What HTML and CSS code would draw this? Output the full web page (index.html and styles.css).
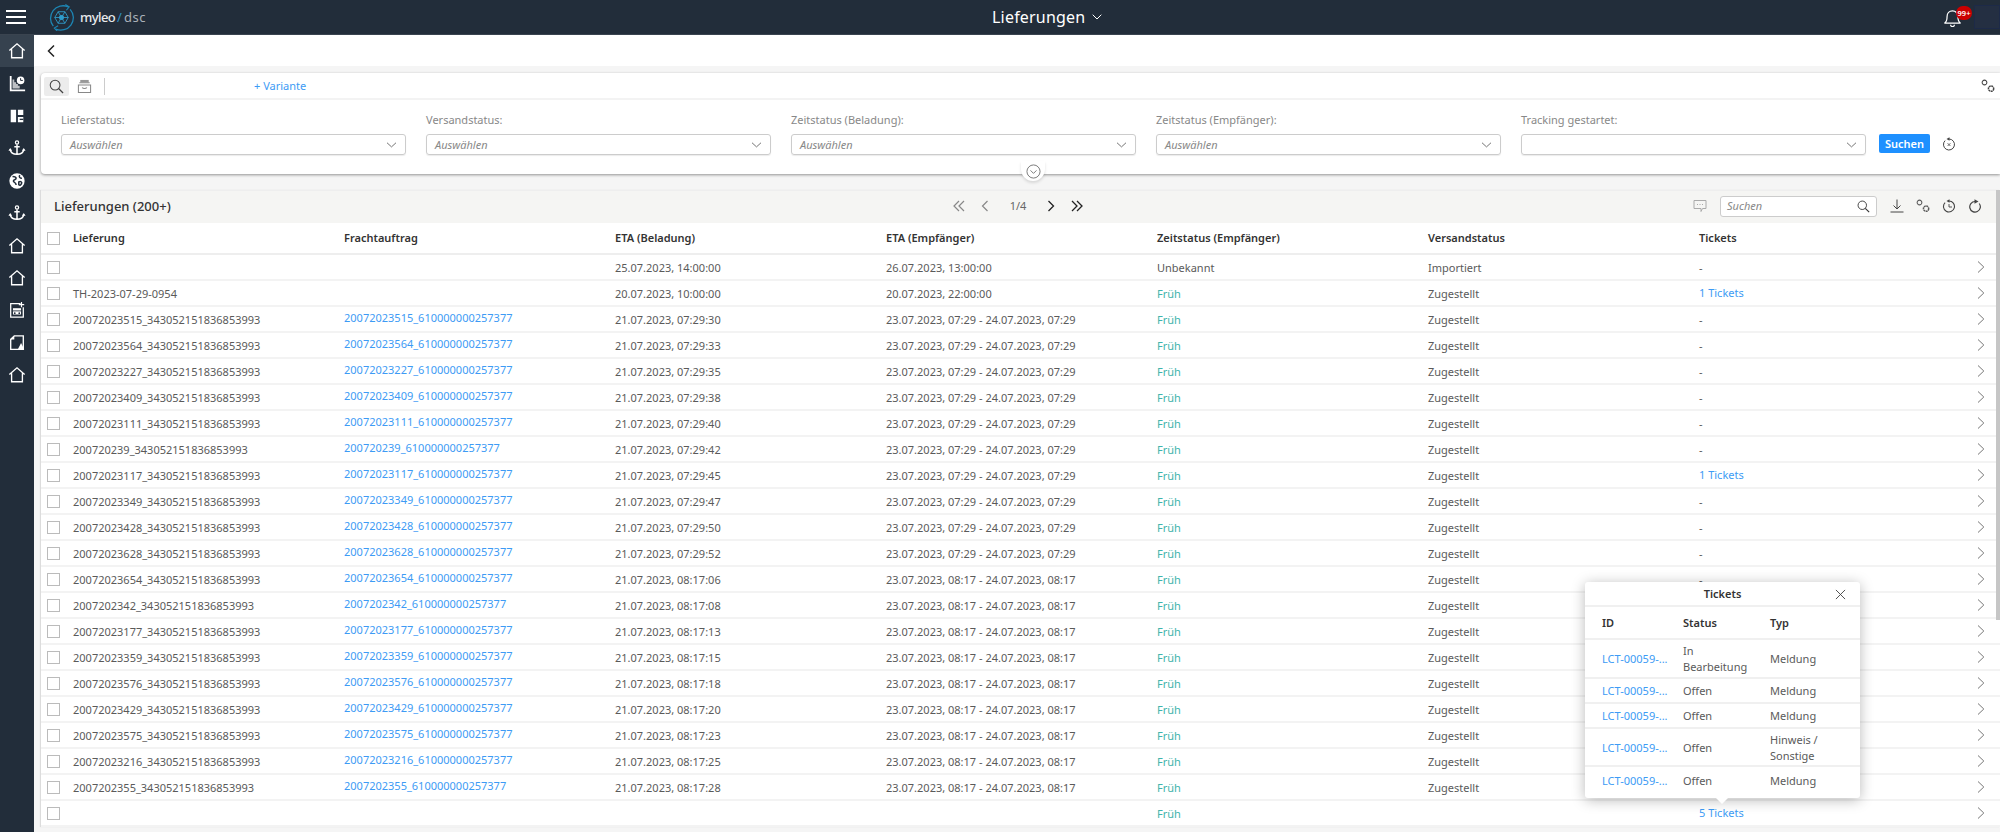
FILE: index.html
```html
<!DOCTYPE html>
<html lang="de">
<head>
<meta charset="utf-8">
<title>Lieferungen</title>
<link rel="stylesheet" href="styles.css">
</head>
<body>
<svg class="defs" width="0" height="0" aria-hidden="true">
  <symbol id="home" viewBox="0 0 20 20"><path d="M1.500 9.500 10 2l8.500 7.500M4 8v9.500h12V8M3.500 17.500h13" fill="none" stroke="currentColor" stroke-width="1.500"/></symbol>
  <symbol id="anchor" viewBox="0 0 20 20"><circle cx="10" cy="3.800" r="1.800" fill="none" stroke="currentColor" stroke-width="1.400"/><path d="M10 6v11M7 8.500h6M2.500 11.500c.5 3.500 3.500 5.500 7.500 5.500s7-2 7.500-5.500" fill="none" stroke="currentColor" stroke-width="1.700"/><path d="M.5 13l2-3 2 3zM15.500 13l2-3 2 3z" fill="currentColor"/></symbol>
  <symbol id="chev-r" viewBox="0 0 12 12"><path d="M3 .5 8.800 6 3 11.500" fill="none" stroke="currentColor" stroke-width="1"/></symbol>
  <symbol id="chev-d" viewBox="0 0 14 8"><path d="M1 1l6 5.500L13 1" fill="none" stroke="currentColor" stroke-width="1.200"/></symbol>
  <symbol id="gears" viewBox="0 0 16 16"><circle cx="4" cy="4" r="2.700" fill="none" stroke="currentColor" stroke-width="1.200"/><circle cx="11.500" cy="11" r="3" fill="none" stroke="currentColor" stroke-width="1.700" stroke-dasharray="2.200 .6"/></symbol>
  <symbol id="mag" viewBox="0 0 16 16"><circle cx="6.500" cy="6.500" r="5.200" fill="none" stroke="currentColor" stroke-width="1.100"/><path d="M10.200 10.200 15 15" stroke="currentColor" stroke-width="1.400"/></symbol>
</svg>

<header class="topbar">
  <button class="burger" aria-label="Menü"><span></span><span></span><span></span></button>
  <div class="brand">
    <svg class="logo" viewBox="0 0 28 28" width="27" height="27">
      <path d="M5.500 23A13 13 0 0 1 21 3" fill="none" stroke="#1d86b4" stroke-width="1.300"/>
      <path d="M23 5.500A13 13 0 0 1 8 26" fill="none" stroke="#1d86b4" stroke-width="1.300"/>
      <path d="M18 .5 22 3l-3 3.500M10.500 22.500 6.500 25l3 3" fill="none" stroke="#1d86b4" stroke-width="1.100"/>
      <path d="M7 14h14M10.500 8l7 12M17.500 8l-7 12M10.500 8h7l3.500 6-3.500 6h-7L7 14z" fill="none" stroke="#2f9ccb" stroke-width=".9"/>
      <circle cx="14" cy="14" r="2.600" fill="#2f9ccb"/>
    </svg>
    <span class="brand-name">myleo</span><span class="brand-slash">/</span><span class="brand-sub">dsc</span>
  </div>
  <div class="page-title">Lieferungen<svg viewBox="0 0 10 6" width="10" height="6"><path d="M.7.7 5 5 9.300.7" fill="none" stroke="#fff" stroke-width="1"/></svg></div>
  <div class="bell">
    <svg viewBox="0 0 20 20" width="19" height="19"><path d="M1.500 16c2-1 2.800-3 2.800-7 0-3.400 2.300-6 5.700-6s5.700 2.600 5.700 6c0 4 .8 6 2.800 7zM8 17.500a2 2 0 0 0 4 0" fill="none" stroke="#fff" stroke-width="1.300"/></svg>
    <span class="badge">99+</span>
  </div>
  <div class="avatar"></div>
</header>

<div class="shell">
  <nav class="sidebar">
    <a class="nav-item active"><svg><use href="#home"/></svg></a>
    <a class="nav-item"><svg viewBox="0 0 20 20"><path d="M2 1h2v15h15v2H2z" fill="currentColor"/><path d="M5 5h2v3h2v2h2v2h2v3H5z" fill="currentColor" opacity=".7"/><circle cx="14" cy="6" r="4.200" fill="currentColor"/><path d="M14 3.500V6h2.500" fill="none" stroke="#222d3a" stroke-width="1.100"/></svg></a>
    <a class="nav-item"><svg viewBox="0 0 20 20"><path d="M3 3h14v14H3zM9 3v14h2v-6h6V9h-6V3z" fill="currentColor" fill-rule="evenodd"/><path d="M13 13h4v1.500h-4z" fill="#222d3a"/></svg></a>
    <a class="nav-item"><svg><use href="#anchor"/></svg></a>
    <a class="nav-item"><svg viewBox="0 0 20 20"><circle cx="10" cy="10" r="8.500" fill="currentColor"/><path d="M5 5c2 0 4 0 4 2s-3 1-3 3 3 1 3 4.500M13 3.500c-1 2 0 3.500 2.500 3.500M12 11c2-1 4 0 3 2s-2 2-3 1z" fill="none" stroke="#222d3a" stroke-width="1.700"/></svg></a>
    <a class="nav-item"><svg><use href="#anchor"/></svg></a>
    <a class="nav-item"><svg><use href="#home"/></svg></a>
    <a class="nav-item"><svg><use href="#home"/></svg></a>
    <a class="nav-item"><svg viewBox="0 0 20 20"><path d="M14 3H3v15h14V7" fill="none" stroke="currentColor" stroke-width="1.400"/><path d="M15 1v6M12 4h6" stroke="currentColor" stroke-width="1.300"/><path d="M5.500 8h9v7h-9z" fill="currentColor"/><path d="M5.500 11h9" stroke="#222d3a"/><circle cx="7.500" cy="13.500" r="1" fill="#222d3a"/><circle cx="12.500" cy="13.500" r="1" fill="#222d3a"/></svg></a>
    <a class="nav-item"><svg viewBox="0 0 20 20"><path d="M7 2h10v15H3V6z" fill="none" stroke="currentColor" stroke-width="1.500"/><path d="M3 6l4-4v4z" fill="currentColor"/><path d="M11 17l3.500-7 3.500 7z" fill="currentColor"/></svg></a>
    <a class="nav-item"><svg><use href="#home"/></svg></a>
  </nav>

  <main class="content">
    <div class="subbar"><svg width="10" height="14" viewBox="0 0 10 14"><path d="M8 1.500 2.500 7 8 12.500" fill="none" stroke="#222" stroke-width="1.500"/></svg></div>

    <section class="filter-card">
      <div class="filter-tools">
        <span class="tool-active"><svg width="15" height="15"><use href="#mag"/></svg></span>
        <svg class="tool-box" viewBox="0 0 16 16" width="15" height="15"><path d="M3.500 1h9v2.500h-9z" fill="#999"/><path d="M2.500 4h11M1.500 6.500h13v8h-13zM5.500 9c1 1.500 4 1.500 5 0" fill="none" stroke="#888" stroke-width="1.100"/></svg>
        <span class="tool-sep"></span>
        <a class="variant">+ Variante</a>
        <svg class="tool-gears" width="14" height="14"><use href="#gears"/></svg>
      </div>
      <div class="filter-fields">
        <div class="field"><label>Lieferstatus:</label><div class="select"><em>Auswählen</em><svg width="11" height="6"><use href="#chev-d"/></svg></div></div>
        <div class="field"><label>Versandstatus:</label><div class="select"><em>Auswählen</em><svg width="11" height="6"><use href="#chev-d"/></svg></div></div>
        <div class="field"><label>Zeitstatus (Beladung):</label><div class="select"><em>Auswählen</em><svg width="11" height="6"><use href="#chev-d"/></svg></div></div>
        <div class="field"><label>Zeitstatus (Empfänger):</label><div class="select"><em>Auswählen</em><svg width="11" height="6"><use href="#chev-d"/></svg></div></div>
        <div class="field"><label>Tracking gestartet:</label><div class="select"><em></em><svg width="11" height="6"><use href="#chev-d"/></svg></div></div>
        <div class="field-actions">
          <button class="btn-search">Suchen</button>
          <svg viewBox="0 0 14 14" width="14" height="14"><path d="M3.100 3.600A5.500 5.500 0 1 0 7 2" fill="none" stroke="#444" stroke-width="1"/><path d="M7.500.2v3.600L4.500 2z" fill="#444"/><path d="M5.600 6.200l2.800 2.800m0-2.800L5.600 9" stroke="#444" stroke-width=".8"/></svg>
        </div>
      </div>
      <span class="collapse"><svg viewBox="0 0 16 16" width="15" height="15"><circle cx="8" cy="8" r="7" fill="none" stroke="#666" stroke-width=".9"/><path d="M4.800 6.800 8 10l3.200-3.200" fill="none" stroke="#666" stroke-width=".9"/></svg></span>
    </section>

    <section class="table-card">
      <div class="table-head">
        <h2>Lieferungen (200+)</h2>
        <div class="pager">
          <svg class="off" viewBox="0 0 12 12" width="12" height="12"><path d="M6 1 1 6l5 5M11 1 6 6l5 5" fill="none" stroke="currentColor" stroke-width="1.200"/></svg>
          <svg class="off" viewBox="0 0 8 12" width="8" height="12"><path d="M6.500 1 1.500 6l5 5" fill="none" stroke="currentColor" stroke-width="1.200"/></svg>
          <span class="page-num">1/4</span>
          <svg viewBox="0 0 8 12" width="8" height="12"><path d="M1.500 1l5 5-5 5" fill="none" stroke="currentColor" stroke-width="1.300"/></svg>
          <svg viewBox="0 0 12 12" width="12" height="12"><path d="M1 1l5 5-5 5M6 1l5 5-5 5" fill="none" stroke="currentColor" stroke-width="1.300"/></svg>
        </div>
        <div class="table-tools">
          <svg class="tool-chat" viewBox="0 0 14 14" width="14" height="14"><path d="M1 1.500h12v8H9.500l-1.500 3V9.500H1z" fill="none" stroke="#aaa" stroke-width="1"/><path d="M4 5.500h1M6.500 5.500h1M9 5.500h1" stroke="#aaa"/></svg>
          <div class="search"><em>Suchen</em><svg width="13" height="13"><use href="#mag"/></svg></div>
          <svg viewBox="0 0 14 14" width="14" height="14"><path d="M7 .5V10M3.500 6.500 7 10l3.500-3.500M.5 13h13" fill="none" stroke="#444" stroke-width="1"/></svg>
          <svg width="14" height="14"><use href="#gears"/></svg>
          <svg viewBox="0 0 14 14" width="14" height="14"><path d="M3.100 3.600A5.500 5.500 0 1 0 7 2" fill="none" stroke="#444" stroke-width="1.100"/><path d="M7.500.2v3.600L4.500 2z" fill="#444"/><path d="M7 5v3h3" fill="none" stroke="#444" stroke-width=".9"/></svg>
          <svg viewBox="0 0 14 14" width="14" height="14"><path d="M11.200 4.500A5.300 5.300 0 1 1 7 2.500" fill="none" stroke="#444" stroke-width="1.200"/><path d="M6.500.3v4.400l4-2.200z" fill="#444"/></svg>
        </div>
      </div>

      <div class="row head"><span class="cb"></span><span>Lieferung</span><span>Frachtauftrag</span><span>ETA (Beladung)</span><span>ETA (Empfänger)</span><span>Zeitstatus (Empfänger)</span><span>Versandstatus</span><span>Tickets</span><span></span></div>

      <div class="row"><span class="cb"></span><span></span><span></span><span>25.07.2023, 14:00:00</span><span>26.07.2023, 13:00:00</span><span>Unbekannt</span><span>Importiert</span><span>-</span><svg class="go"><use href="#chev-r"/></svg></div>
      <div class="row"><span class="cb"></span><span>TH-2023-07-29-0954</span><span></span><span>20.07.2023, 10:00:00</span><span>20.07.2023, 22:00:00</span><span class="early">Früh</span><span>Zugestellt</span><a class="link">1 Tickets</a><svg class="go"><use href="#chev-r"/></svg></div>
      <div class="row"><span class="cb"></span><span>20072023515_343052151836853993</span><a class="link up">20072023515_610000000257377</a><span>21.07.2023, 07:29:30</span><span>23.07.2023, 07:29 - 24.07.2023, 07:29</span><span class="early">Früh</span><span>Zugestellt</span><span>-</span><svg class="go"><use href="#chev-r"/></svg></div>
      <div class="row"><span class="cb"></span><span>20072023564_343052151836853993</span><a class="link up">20072023564_610000000257377</a><span>21.07.2023, 07:29:33</span><span>23.07.2023, 07:29 - 24.07.2023, 07:29</span><span class="early">Früh</span><span>Zugestellt</span><span>-</span><svg class="go"><use href="#chev-r"/></svg></div>
      <div class="row"><span class="cb"></span><span>20072023227_343052151836853993</span><a class="link up">20072023227_610000000257377</a><span>21.07.2023, 07:29:35</span><span>23.07.2023, 07:29 - 24.07.2023, 07:29</span><span class="early">Früh</span><span>Zugestellt</span><span>-</span><svg class="go"><use href="#chev-r"/></svg></div>
      <div class="row"><span class="cb"></span><span>20072023409_343052151836853993</span><a class="link up">20072023409_610000000257377</a><span>21.07.2023, 07:29:38</span><span>23.07.2023, 07:29 - 24.07.2023, 07:29</span><span class="early">Früh</span><span>Zugestellt</span><span>-</span><svg class="go"><use href="#chev-r"/></svg></div>
      <div class="row"><span class="cb"></span><span>20072023111_343052151836853993</span><a class="link up">20072023111_610000000257377</a><span>21.07.2023, 07:29:40</span><span>23.07.2023, 07:29 - 24.07.2023, 07:29</span><span class="early">Früh</span><span>Zugestellt</span><span>-</span><svg class="go"><use href="#chev-r"/></svg></div>
      <div class="row"><span class="cb"></span><span>200720239_343052151836853993</span><a class="link up">200720239_610000000257377</a><span>21.07.2023, 07:29:42</span><span>23.07.2023, 07:29 - 24.07.2023, 07:29</span><span class="early">Früh</span><span>Zugestellt</span><span>-</span><svg class="go"><use href="#chev-r"/></svg></div>
      <div class="row"><span class="cb"></span><span>20072023117_343052151836853993</span><a class="link up">20072023117_610000000257377</a><span>21.07.2023, 07:29:45</span><span>23.07.2023, 07:29 - 24.07.2023, 07:29</span><span class="early">Früh</span><span>Zugestellt</span><a class="link">1 Tickets</a><svg class="go"><use href="#chev-r"/></svg></div>
      <div class="row"><span class="cb"></span><span>20072023349_343052151836853993</span><a class="link up">20072023349_610000000257377</a><span>21.07.2023, 07:29:47</span><span>23.07.2023, 07:29 - 24.07.2023, 07:29</span><span class="early">Früh</span><span>Zugestellt</span><span>-</span><svg class="go"><use href="#chev-r"/></svg></div>
      <div class="row"><span class="cb"></span><span>20072023428_343052151836853993</span><a class="link up">20072023428_610000000257377</a><span>21.07.2023, 07:29:50</span><span>23.07.2023, 07:29 - 24.07.2023, 07:29</span><span class="early">Früh</span><span>Zugestellt</span><span>-</span><svg class="go"><use href="#chev-r"/></svg></div>
      <div class="row"><span class="cb"></span><span>20072023628_343052151836853993</span><a class="link up">20072023628_610000000257377</a><span>21.07.2023, 07:29:52</span><span>23.07.2023, 07:29 - 24.07.2023, 07:29</span><span class="early">Früh</span><span>Zugestellt</span><span>-</span><svg class="go"><use href="#chev-r"/></svg></div>
      <div class="row"><span class="cb"></span><span>20072023654_343052151836853993</span><a class="link up">20072023654_610000000257377</a><span>21.07.2023, 08:17:06</span><span>23.07.2023, 08:17 - 24.07.2023, 08:17</span><span class="early">Früh</span><span>Zugestellt</span><span>-</span><svg class="go"><use href="#chev-r"/></svg></div>
      <div class="row"><span class="cb"></span><span>2007202342_343052151836853993</span><a class="link up">2007202342_610000000257377</a><span>21.07.2023, 08:17:08</span><span>23.07.2023, 08:17 - 24.07.2023, 08:17</span><span class="early">Früh</span><span>Zugestellt</span><span>-</span><svg class="go"><use href="#chev-r"/></svg></div>
      <div class="row"><span class="cb"></span><span>20072023177_343052151836853993</span><a class="link up">20072023177_610000000257377</a><span>21.07.2023, 08:17:13</span><span>23.07.2023, 08:17 - 24.07.2023, 08:17</span><span class="early">Früh</span><span>Zugestellt</span><span>-</span><svg class="go"><use href="#chev-r"/></svg></div>
      <div class="row"><span class="cb"></span><span>20072023359_343052151836853993</span><a class="link up">20072023359_610000000257377</a><span>21.07.2023, 08:17:15</span><span>23.07.2023, 08:17 - 24.07.2023, 08:17</span><span class="early">Früh</span><span>Zugestellt</span><span>-</span><svg class="go"><use href="#chev-r"/></svg></div>
      <div class="row"><span class="cb"></span><span>20072023576_343052151836853993</span><a class="link up">20072023576_610000000257377</a><span>21.07.2023, 08:17:18</span><span>23.07.2023, 08:17 - 24.07.2023, 08:17</span><span class="early">Früh</span><span>Zugestellt</span><span>-</span><svg class="go"><use href="#chev-r"/></svg></div>
      <div class="row"><span class="cb"></span><span>20072023429_343052151836853993</span><a class="link up">20072023429_610000000257377</a><span>21.07.2023, 08:17:20</span><span>23.07.2023, 08:17 - 24.07.2023, 08:17</span><span class="early">Früh</span><span>Zugestellt</span><span>-</span><svg class="go"><use href="#chev-r"/></svg></div>
      <div class="row"><span class="cb"></span><span>20072023575_343052151836853993</span><a class="link up">20072023575_610000000257377</a><span>21.07.2023, 08:17:23</span><span>23.07.2023, 08:17 - 24.07.2023, 08:17</span><span class="early">Früh</span><span>Zugestellt</span><span>-</span><svg class="go"><use href="#chev-r"/></svg></div>
      <div class="row"><span class="cb"></span><span>20072023216_343052151836853993</span><a class="link up">20072023216_610000000257377</a><span>21.07.2023, 08:17:25</span><span>23.07.2023, 08:17 - 24.07.2023, 08:17</span><span class="early">Früh</span><span>Zugestellt</span><span>-</span><svg class="go"><use href="#chev-r"/></svg></div>
      <div class="row"><span class="cb"></span><span>2007202355_343052151836853993</span><a class="link up">2007202355_610000000257377</a><span>21.07.2023, 08:17:28</span><span>23.07.2023, 08:17 - 24.07.2023, 08:17</span><span class="early">Früh</span><span>Zugestellt</span><span>-</span><svg class="go"><use href="#chev-r"/></svg></div>
      <div class="row"><span class="cb"></span><span></span><span></span><span></span><span></span><span class="early">Früh</span><span></span><a class="link">5 Tickets</a><svg class="go"><use href="#chev-r"/></svg></div>
    </section>
  </main>
</div>

<aside class="popover">
  <div class="pop-title">Tickets<svg viewBox="0 0 12 12" width="11" height="11"><path d="M1 1l10 10M11 1 1 11" stroke="#444" stroke-width="1"/></svg></div>
  <div class="pop-row pop-head"><span>ID</span><span>Status</span><span>Typ</span></div>
  <div class="pop-row tall"><a class="link">LCT-00059-...</a><span>In Bearbeitung</span><span>Meldung</span></div>
  <div class="pop-row"><a class="link">LCT-00059-...</a><span>Offen</span><span>Meldung</span></div>
  <div class="pop-row"><a class="link">LCT-00059-...</a><span>Offen</span><span>Meldung</span></div>
  <div class="pop-row tall"><a class="link">LCT-00059-...</a><span>Offen</span><span>Hinweis / Sonstige</span></div>
  <div class="pop-row"><a class="link">LCT-00059-...</a><span>Offen</span><span>Meldung</span></div>
</aside>
<div class="scrollthumb"></div>
</body>
</html>
```
FILE: styles.css
```css
* { box-sizing: border-box; }
html, body { margin: 0; height: 832px; overflow: hidden; }
body { font: 11px/16px "Noto Sans", "Open Sans", sans-serif; color: #5a5a5a; background: #f5f5f5; }
em { font-style: italic; }
.defs { position: absolute; }

.topbar { height: 35px; background: #222d3a; border-bottom: 1px solid #3a4450; display: flex; align-items: center; color: #fff; position: relative; }
.burger { width: 34px; height: 35px; padding: 0 6px; border: 0; background: none; display: flex; flex-direction: column; justify-content: center; gap: 4px; }
.burger span { display: block; height: 2px; width: 20px; background: #fff; }
.brand { display: flex; align-items: center; margin-left: 14px; font-size: 13px; }
.logo { margin-right: 5px; }
.brand-name { color: #e8eaec; font-weight: 500; letter-spacing: -.6px; }
.brand-slash { color: #2f8fc0; margin: 0 2px; }
.brand-sub { color: #aab1b8; letter-spacing: .5px; }
.page-title { position: absolute; left: 992px; top: 6px; font-size: 16px; line-height: 22px; display: flex; align-items: center; gap: 7px; letter-spacing: .2px; }
.bell { position: absolute; left: 1943px; top: 8px; height: 20px; }
.badge { position: absolute; left: 13px; top: -2px; width: 16px; height: 14px; border-radius: 7px; background: #c00; color: #fff; font-size: 7.500px; line-height: 14px; text-align: center; font-weight: 600; }
.avatar { position: absolute; left: 1974px; top: 5px; width: 26px; height: 24px; background: #242f42; border: 1px solid #1d2a48; }

.shell { display: flex; height: 797px; }
.sidebar { width: 34px; flex: none; background: #222d3a; color: #fff; }
.nav-item { display: flex; align-items: center; justify-content: center; height: 32.400px; }
.nav-item.active { background: #36424f; }
.nav-item svg { width: 18px; height: 18px; }
.content { flex: 1; min-width: 0; }
.subbar { height: 31px; background: #fff; display: flex; align-items: center; padding-left: 12px; }

.filter-card { position: relative; margin: 7px 0 0 7px; height: 101px; background: #fff; border-radius: 4px 0 0 4px; box-shadow: 0 1px 3px rgba(0,0,0,.4); }
.filter-tools { height: 27px; display: flex; align-items: center; border-bottom: 2px solid #f3f3f3; padding: 1px 5px 0 3px; }
.tool-active { width: 25px; height: 19px; background: #ececec; border-radius: 2px; display: flex; align-items: center; justify-content: center; color: #444; }
.tool-box { margin-left: 8px; }
.tool-sep { width: 1px; height: 17px; background: #ccc; margin-left: 12px; }
.variant { color: #3d9bf5; margin-left: 149px; }
.tool-gears { margin-left: auto; color: #444; }
.filter-fields { display: grid; grid-template-columns: repeat(5, 345px) auto; column-gap: 20px; padding: 12px 0 0 20px; }
.field label { display: block; color: #888; height: 22px; line-height: 16px; }
.select { height: 21px; border: 1px solid #ccc; border-radius: 3px; display: flex; align-items: center; justify-content: space-between; padding: 0 8px; box-shadow: 0 1px 1px rgba(0,0,0,.08); }
.select em { color: #888; }
.select svg { color: #666; }
.field-actions { display: flex; align-items: center; gap: 12px; margin: 22px 0 0 -7px; height: 19px; }
.btn-search { width: 51px; height: 19px; padding: 0; border: 0; border-radius: 2px; background: #1e90ff; color: #fff; font: 600 11px/19px "Noto Sans", sans-serif; }
.collapse { position: absolute; left: 980px; top: 88px; width: 24px; height: 20px; background: #fff; border-radius: 0 0 12px 12px; display: flex; align-items: center; justify-content: center; box-shadow: 0 2px 3px rgba(0,0,0,.12); }

.table-card { margin: 16px 0 0 7px; background: #fff; box-shadow: -1px 0 1px rgba(0,0,0,.1); }
.table-head { height: 33px; background: #f5f5f3; border-top: 1px solid #eee; display: grid; grid-template-columns: 1fr auto 1fr; align-items: center; padding: 0 18px 0 13px; }
.table-head h2 { margin: -2px 0 0; font-size: 13px; line-height: 16px; font-weight: 500; color: #333; }
.pager { display: flex; align-items: center; gap: 16px; color: #222; margin: -3px 0 0 0; }
.pager .off { color: #888; }
.page-num { width: 18px; margin: 0 4px; text-align: center; color: #666; }
.table-tools { display: flex; justify-content: flex-end; align-items: center; gap: 12px; margin-top: -2px; }
.tool-chat { margin-right: 1px; }
.search { width: 157px; height: 21px; border: 1px solid #ccc; border-radius: 3px; background: #fff; display: flex; align-items: center; justify-content: space-between; padding: 0 6px; color: #888; margin-right: 1px; }
.search svg { color: #333; }

.row { height: 26px; padding-top: 2px; display: grid; grid-template-columns: 26px repeat(7, 271px) 1fr; align-items: center; padding-left: 6px; border-bottom: 2px solid #f3f3f3; }
.row.head { height: 32px; padding-top: 0; font-weight: 600; color: #333; border-bottom: 2px solid #eeeeee; }
.cb { width: 13px; height: 13px; margin-top: -1px; border: 1px solid #bbb; background: #fff; }
.head .cb { margin-top: 0; }
.link { color: #3d9bf5; position: relative; top: -1px; }
.link.up { top: -2px; }
.pop-row .link { top: 0; }
.early { color: #3fb4ac; }
.go { width: 12px; height: 12px; color: #777; margin: -3px 0 0 5px; }

.popover { position: absolute; left: 1585px; top: 582px; width: 275px; background: #fff; border-radius: 3px; box-shadow: 0 2px 14px rgba(0,0,0,.28); }
.popover::after { content: ""; position: absolute; left: 131px; bottom: -6px; width: 0; height: 0; border: 6px solid transparent; border-bottom: 0; border-top-color: #fff; }
.pop-title { height: 25px; display: flex; align-items: center; justify-content: center; color: #333; font-weight: 600; border-bottom: 2px solid #f0f0f0; position: relative; }
.pop-title svg { position: absolute; right: 14px; top: 7px; }
.pop-row { display: grid; grid-template-columns: 81px 87px 1fr; align-items: center; height: 25px; padding: 2px 0 0 17px; border-bottom: 2px solid #f0f0f0; }
.pop-row span { max-width: 70px; }
.pop-row:last-child { border-bottom: 0; height: 31px; padding: 0 0 3px 17px; }
.pop-row.tall { height: 38.500px; }
.pop-head { height: 33px; padding-top: 0; color: #333; font-weight: 600; }
.scrollthumb { position: absolute; right: 0; top: 190px; width: 4px; height: 430px; background: #c6c6c6; }
```
